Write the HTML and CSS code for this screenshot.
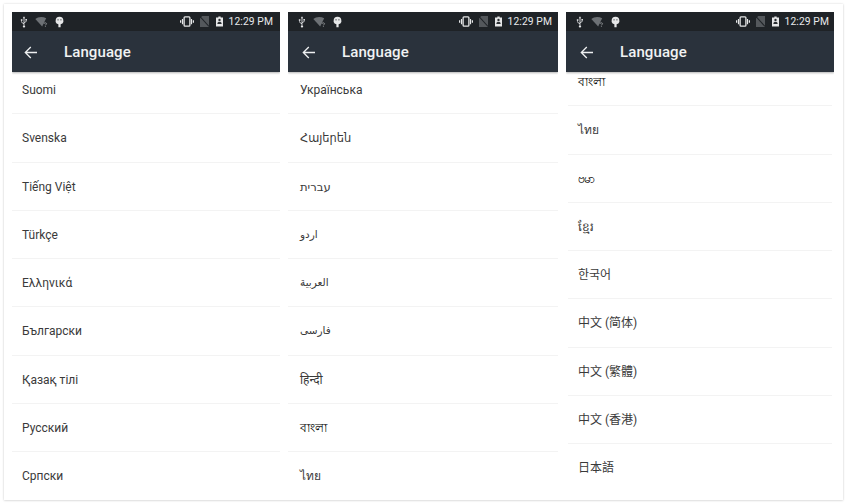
FILE: index.html
```html
<!DOCTYPE html>
<html lang="en">
<head>
<meta charset="utf-8">
<title>Language</title>
<link rel="stylesheet" href="styles.css">
</head>
<body>
<svg class="defs" width="0" height="0" aria-hidden="true">
  <symbol id="usb" viewBox="0 0 12 14"><path d="M6 0 4.600 2.400h.9v6.200L3.400 7V5.600h.7V3.800H2.200v1.800h.5v1.800L5.500 9.600v1.500a1.300 1.300 0 1 0 1 0V8.200l2.400-1.600V5.200h.6V3.400H7.700v1.800h.5v1L6.500 7.300V2.400h.9z" fill="currentColor"/></symbol>
  <symbol id="wifi" viewBox="0 0 16 12"><path d="M0 2.500C3-.5 9-.7 13 1.500L8.200 11.500z" fill="#6d7175"/><path d="M10.400 8.200c0-1.500 3-1.600 3-.1 0 1-1.300 1-1.300 2M12.100 10.800v.9" fill="none" stroke="#aeb1b4" stroke-width=".9"/></symbol>
  <symbol id="bug" viewBox="0 0 12 14"><path d="M1.500 5.500a4.500 4.500 0 0 1 9 0V7a3.500 3.500 0 0 1-3.200 2.600V13H4.700V9.600A3.500 3.500 0 0 1 1.500 7z" fill="currentColor"/><circle cx="4.300" cy="4.500" r=".7" fill="#1f2327"/><circle cx="7.700" cy="4.500" r=".7" fill="#1f2327"/></symbol>
  <symbol id="vibrate" viewBox="0 0 16 12"><rect x="4.700" y=".8" width="6.600" height="10.400" rx="1" fill="none" stroke="currentColor" stroke-width="1.500"/><path d="M0 4.500h1.400v3H0zM2.200 3h1.300v6H2.200zM14.600 4.500H16v3h-1.400zM12.500 3h1.300v6h-1.300z" fill="currentColor"/></symbol>
  <symbol id="nosim" viewBox="0 0 10 12"><path d="M2.500 0H10v12H0V2.500z" fill="#54585c"/><path d="M0 .5 10 11.500" stroke="#1f2327" stroke-width="1.200"/></symbol>
  <symbol id="battery" viewBox="0 0 9 13"><path d="M3 0h3v1.300h3V13H0V1.300h3z" fill="#e6e7e8"/><path d="M4.500 3a1.500 1.500 0 1 1 0 3 1.500 1.500 0 0 1 0-3zM1.800 9c0-3 5.400-3 5.400 0v.8H1.800z" fill="#2a2e32"/></symbol>
  <symbol id="back" viewBox="0 0 14 13"><path d="M13 6.500H1.500M6.800 1 1.300 6.500l5.500 5.500" fill="none" stroke="currentColor" stroke-width="1.300"/></symbol>
</svg>
<main class="card">
  <section class="phone phone-left">
    <div class="status">
      <div class="status-left">
        <svg class="ic ic-usb"><use href="#usb"/></svg>
        <svg class="ic ic-wifi"><use href="#wifi"/></svg>
        <svg class="ic ic-bug"><use href="#bug"/></svg>
      </div>
      <div class="status-right">
        <svg class="ic ic-vib"><use href="#vibrate"/></svg>
        <svg class="ic ic-sim"><use href="#nosim"/></svg>
        <svg class="ic ic-bat"><use href="#battery"/></svg>
        <span class="time">12:29 PM</span>
      </div>
    </div>
    <header class="toolbar">
      <svg class="ic-back"><use href="#back"/></svg>
      <h1 class="title">Language</h1>
    </header>
    <ul class="list list-a">
      <li>Suomi</li><li>Svenska</li><li>Tiếng Việt</li><li>Türkçe</li><li>Ελληνικά</li><li>Български</li><li>Қазақ тілі</li><li>Русский</li><li>Српски</li>
    </ul>
  </section>
  <section class="phone phone-mid">
    <div class="status">
      <div class="status-left">
        <svg class="ic ic-usb"><use href="#usb"/></svg>
        <svg class="ic ic-wifi"><use href="#wifi"/></svg>
        <svg class="ic ic-bug"><use href="#bug"/></svg>
      </div>
      <div class="status-right">
        <svg class="ic ic-vib"><use href="#vibrate"/></svg>
        <svg class="ic ic-sim"><use href="#nosim"/></svg>
        <svg class="ic ic-bat"><use href="#battery"/></svg>
        <span class="time">12:29 PM</span>
      </div>
    </div>
    <header class="toolbar">
      <svg class="ic-back"><use href="#back"/></svg>
      <h1 class="title">Language</h1>
    </header>
    <ul class="list list-a">
      <li>Українська</li><li class="hy">Հայերեն</li><li class="he">עברית</li><li class="ar">اردو</li><li class="ar">العربية</li><li class="ar">فارسی</li><li>हिन्दी</li><li class="dark">বাংলা</li><li>ไทย</li>
    </ul>
  </section>
  <section class="phone phone-right">
    <div class="status">
      <div class="status-left">
        <svg class="ic ic-usb"><use href="#usb"/></svg>
        <svg class="ic ic-wifi"><use href="#wifi"/></svg>
        <svg class="ic ic-bug"><use href="#bug"/></svg>
      </div>
      <div class="status-right">
        <svg class="ic ic-vib"><use href="#vibrate"/></svg>
        <svg class="ic ic-sim"><use href="#nosim"/></svg>
        <svg class="ic ic-bat"><use href="#battery"/></svg>
        <span class="time">12:29 PM</span>
      </div>
    </div>
    <header class="toolbar">
      <svg class="ic-back"><use href="#back"/></svg>
      <h1 class="title">Language</h1>
    </header>
    <ul class="list list-b">
      <li class="dark">বাংলা</li><li>ไทย</li><li class="dark">ဗမာ</li><li>ខ្មែរ</li><li>한국어</li><li>中文 (简体)</li><li>中文 (繁體)</li><li>中文 (香港)</li><li>日本語</li>
    </ul>
  </section>
</main>
</body>
</html>
```
FILE: styles.css
```css
* { box-sizing: border-box; }
html, body { margin: 0; padding: 0; }
body {
  width: 847px;
  height: 504px;
  background: #fff;
  overflow: hidden;
  padding: 4px;
  font-family: Roboto, "Noto Sans", "DejaVu Sans", "Noto Sans CJK SC", sans-serif;
}
.defs { position: absolute; }
.card {
  width: 839px;
  height: 496px;
  background: #fff;
  display: grid;
  grid-template-columns: 268px 270px 268px;
  column-gap: 8px;
  padding: 8px 0 0 8px;
  box-shadow: 0 0 2px rgba(0, 0, 0, .16), 0 1px 2px rgba(0, 0, 0, .08);
}
.phone {
  --inset: 0px;
  --time-gap: 7px;
  display: flex;
  flex-direction: column;
  height: 488px;
  overflow: hidden;
  background: #fff;
}
.phone-mid { --inset: 2px; --time-gap: 6px; }
.phone-right { --inset: 2px; --time-gap: 5px; }
.status {
  flex: none;
  height: 19px;
  background: #1f2327;
  color: #e6e7e8;
  display: flex;
  align-items: center;
  justify-content: space-between;
  padding: 0 var(--time-gap) 0 calc(7px + var(--inset));
}
.status-left, .status-right { display: flex; align-items: center; }
.ic { display: block; flex: none; color: #e6e7e8; }
.ic-usb { width: 10px; height: 12px; }
.ic-wifi { width: 14px; height: 10px; margin-left: 6px; }
.ic-bug { width: 11px; height: 12px; margin-left: 5px; }
.ic-vib { width: 14px; height: 11px; }
.ic-sim { width: 9px; height: 11px; margin-left: 6px; }
.ic-bat { width: 7px; height: 11px; margin-left: 7px; }
.time { font-size: 10.3px; margin-left: 6px; letter-spacing: .1px; color: #e9eaeb; }
.toolbar {
  flex: none;
  height: 41px;
  background: #2a323c;
  color: #f1f2f3;
  display: flex;
  align-items: center;
  padding: 1px 0 0 calc(12px + var(--inset));
  position: relative;
  z-index: 1;
  box-shadow: 0 1px 2px rgba(0, 0, 0, .3);
}
.ic-back { width: 14px; height: 13px; color: #eef0f1; }
.title { margin: 0 0 0 26px; font-size: 15px; font-weight: 500; letter-spacing: .1px; }
.list {
  list-style: none;
  margin: 0;
  padding: 0;
  flex: none;
  font-size: 12px;
  color: #3a3a3a;
}
.list-a { margin-top: -6px; }
.list-b { margin-top: -14px; }
.list li {
  height: 48.3px;
  line-height: 48.3px;
  padding-left: calc(10px + var(--inset));
  border-bottom: 1px solid #f3f3f3;
  white-space: nowrap;
}
.phone-right .list li { margin: 0 2px; padding-left: 10px; }
.list li:last-child { border-bottom: 0; }
.list .hy { font-size: 11.4px; }
.list .he { font-size: 11.6px; }
.list .ar { font-size: 10.5px; }
.list .dark { color: #000; }
```
